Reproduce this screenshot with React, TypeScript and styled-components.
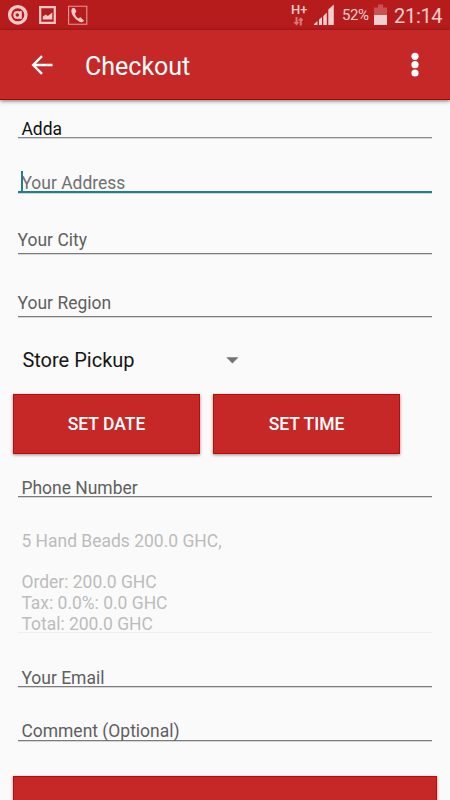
import React from 'react';
import styled, { createGlobalStyle } from 'styled-components';

const GlobalStyle = createGlobalStyle`
  * { box-sizing: border-box; }
  html, body { margin: 0; padding: 0; background: #fafafa; }
  body { overflow: hidden; font-family: Roboto, "Liberation Sans", sans-serif; }
`;

const Screen = styled.div`
  width: 450px;
  height: 800px;
  overflow: hidden;
  background: #fafafa;
  display: flex;
  flex-direction: column;
`;

const StatusBar = styled.header`
  height: 30px;
  flex: none;
  display: flex;
  justify-content: space-between;
  background: #b71c1c;
`;

const StatusIcons = styled.svg`
  display: block;
  height: 30px;
`;

const StatusRight = styled.div`
  display: flex;
  align-items: flex-start;
  color: #f3cfcf;
  width: 164px;
`;

const Network = styled.div`
  width: 22px;
  height: 30px;
  padding: 2px 0 0 5px;
  display: flex;
  flex-direction: column;
  font-size: 13px;
  font-weight: 500;
  line-height: 15px;
`;

const Battery = styled.span`
  width: 30px;
  margin-left: 4px;
  font-size: 15px;
  line-height: 31px;
  letter-spacing: -0.4px;
  white-space: nowrap;
`;

const Clock = styled.span`
  margin-left: 4px;
  font-size: 20px;
  line-height: 32px;
  letter-spacing: -0.3px;
  white-space: nowrap;
`;

const Toolbar = styled.nav`
  height: 70px;
  flex: none;
  display: flex;
  align-items: center;
  padding: 1px 30px 0 31px;
  background: #c62828;
  border-bottom: 1px solid #b80000;
  box-shadow: 0 1px 4px rgba(0, 0, 0, 0.55);
  color: #fff;
`;

const Title = styled.h1`
  flex: 1;
  margin: 4px 0 0 31px;
  font-size: 25px;
  font-weight: 400;
  line-height: 32px;
`;

const Form = styled.main`
  display: flex;
  flex-direction: column;
  padding: 0 17.6px 0 17.6px;
`;

type FieldTone = 'value' | 'hint' | 'active' | 'disabled';

const lineColors: Record<FieldTone, string> = {
  value: '#8c8c8c',
  hint: '#7c7c7c',
  active: '#1e7f8e',
  disabled: '#f0f0f0',
};

const textColors: Record<FieldTone, string> = {
  value: '#111',
  hint: '#606060',
  active: '#707070',
  disabled: '#bcbcbc',
};

const Field = styled.div<{ $height: number; $top: number; $tone: FieldTone; $indent?: number }>`
  height: ${p => p.$height}px;
  flex: none;
  padding: ${p => p.$top}px 0 0 ${p => p.$indent ?? 3.8}px;
  border-bottom: ${p => (p.$tone === 'active' ? 2 : 1)}px solid ${p => lineColors[p.$tone]};
  box-shadow: 0 1px 0 ${p => (p.$tone === 'disabled' ? 'transparent' : '#d5d5d5')};
  color: ${p => textColors[p.$tone]};
  font-size: 17.48px;
  line-height: 20.6px;
  white-space: pre;
`;

const Caret = styled.span`
  display: inline-block;
  width: 2px;
  height: 22px;
  margin: -3px -2px 0 0;
  vertical-align: -4px;
  background: #1e7f8e;
`;

const Spinner = styled.div`
  display: flex;
  align-items: center;
  justify-content: space-between;
  width: 221px;
  height: 77px;
  padding: 9px 0 0 4.8px;
  color: #161616;
  font-size: 20px;
`;

const Arrow = styled.svg`
  display: block;
  width: 13px;
  height: 7px;
`;

const ButtonRow = styled.div`
  display: flex;
  gap: 13px;
  margin: 0 -4.6px;
`;

const Button = styled.button`
  width: 187px;
  height: 60px;
  padding: 0;
  border: 1px solid #c00808;
  background: #c62828;
  box-shadow: 0 1px 3px rgba(0, 0, 0, 0.42);
  color: #fff;
  font-family: inherit;
  font-size: 17.5px;
  font-weight: 500;
`;

const SubmitButton = styled(Button)`
  flex: none;
  width: 424px;
  margin: 35px 0 0 -4.6px;
`;

export default function App() {
  return (
    <>
      <GlobalStyle />
      <Screen>
        <StatusBar>
          <StatusIcons width="100" viewBox="0 0 100 30" fill="none" stroke="#f3c9c9">
            <circle cx="17.8" cy="14.8" r="8.2" strokeWidth="3.4" />
            <circle cx="17.3" cy="15" r="2.9" strokeWidth="2.2" />
            <path d="M20.7 11v8" strokeWidth="2.2" />
            <path d="M40.2 7.1h14.6v15.8H40.2z" strokeWidth="2.2" />
            <path d="M42.8 19.5v-3l3-2 2 1.5 4.5-3.5v7z" fill="#f3c9c9" stroke="none" />
            <path d="M68.6 6.2h18.2v18H68.6z" stroke="#e59797" strokeWidth="1.1" />
            <path d="M73.2 7.7 C70.2 9 71 14 74.8 18 C78.5 22 82.3 23.5 84 20.8 L80.5 17.3 L78.3 18.4 C76.7 17.2 75.5 15.8 74.8 13.4 L76.2 12 C76.2 10 75.3 7.9 73.2 7.7z" fill="#f3c9c9" stroke="none" />
          </StatusIcons>
          <StatusRight>
            <Network>
              H+
              <svg width="12" height="9" viewBox="0 0 12 9" fill="#da7777">
                <path d="M4.5 0h2v5h2L5.5 8.5 2.3 5h2.2zM8.8 8.5h2V3.7h2L9.8.2 6.7 3.7h2.1z" />
              </svg>
            </Network>
            <svg width="30" height="30" viewBox="0 0 30 30" fill="#f3cfcf">
              <path d="M6 25v-1l3.5-3v4zM11 25v-5.5l3-2.5v8zM15.3 25v-9l3.5-3.5V25zM20.3 25V9.5l5.5-5V25z" />
            </svg>
            <Battery>52%</Battery>
            <svg width="18" height="30" viewBox="0 0 18 30">
              <path d="M6 4.5h5v3h4V15H2V7.5h4z" fill="#ca5252" />
              <path d="M2 15h13v10H2z" fill="#f3cfcf" />
            </svg>
            <Clock>21:14</Clock>
          </StatusRight>
        </StatusBar>
        <Toolbar>
          <svg width="23" height="22" viewBox="0 0 23 22" fill="none" stroke="#fff" strokeWidth="2.4">
            <path d="M11 2.2 2.2 11l8.8 8.8M2.2 11H21.5" />
          </svg>
          <Title>Checkout</Title>
          <svg width="10" height="26" viewBox="0 0 10 26" fill="#fff">
            <circle cx="5" cy="4.3" r="3.6" />
            <circle cx="5" cy="12.7" r="3.6" />
            <circle cx="5" cy="21" r="3.6" />
          </svg>
        </Toolbar>
        <Form>
          <Field $height={38} $top={19} $tone="value">Adda</Field>
          <Field $height={55} $top={35} $tone="active"><Caret />Your Address</Field>
          <Field $height={61} $top={37} $tone="hint" $indent={0}>Your City</Field>
          <Field $height={63} $top={39} $tone="hint" $indent={0}>Your Region</Field>
          <Spinner>
            Store Pickup
            <Arrow viewBox="0 0 13 7"><path d="M.3.3h12.2L6.4 6.5z" fill="#757575" /></Arrow>
          </Spinner>
          <ButtonRow>
            <Button>SET DATE</Button>
            <Button>SET TIME</Button>
          </ButtonRow>
          <Field $height={43} $top={24} $tone="hint">Phone Number</Field>
          <Field $height={136} $top={34.2} $tone="disabled">
            {'5 Hand Beads 200.0 GHC,\n\nOrder: 200.0 GHC\nTax: 0.0%: 0.0 GHC\nTotal: 200.0 GHC'}
          </Field>
          <Field $height={54} $top={35} $tone="hint">Your Email</Field>
          <Field $height={54} $top={34} $tone="hint">Comment (Optional)</Field>
          <SubmitButton aria-label="Submit" />
        </Form>
      </Screen>
    </>
  );
}
